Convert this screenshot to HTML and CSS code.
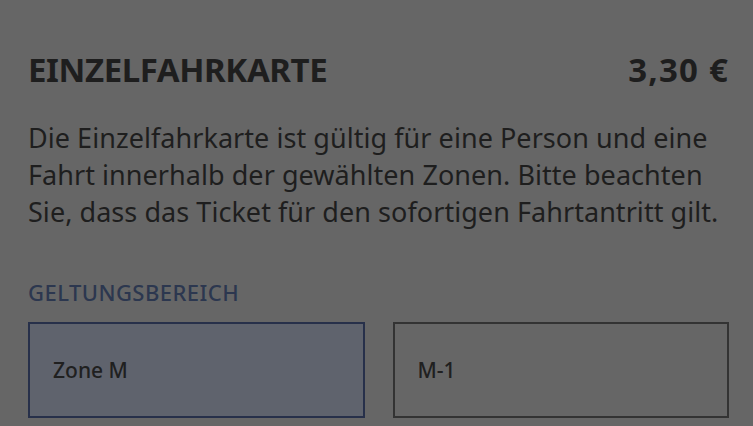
FILE: index.html
```html
<!DOCTYPE html>
<html lang="de">
<head>
<meta charset="utf-8">
<link rel="stylesheet" href="styles.css">
</head>
<body>
<main class="page">
  <header class="head">
    <h1 class="title">EINZELFAHRKARTE</h1>
    <div class="price">3,30 €</div>
  </header>
  <p class="desc">Die Einzelfahrkarte ist gültig für eine Person und eine Fahrt innerhalb der gewählten Zonen. Bitte beachten Sie, dass das Ticket für den sofortigen Fahrtantritt gilt.</p>
  <h2 class="label">GELTUNGSBEREICH</h2>
  <div class="options">
    <div class="opt opt-active">Zone M</div>
    <div class="opt">M-1</div>
  </div>
</main>
</body>
</html>
```
FILE: styles.css
```css
html, body {
  margin: 0;
  padding: 0;
  background: #666666;
}
body {
  width: 753px;
  height: 426px;
  overflow: hidden;
  font-family: "Noto Sans", "Open Sans", sans-serif;
  color: #1e1e1e;
}
.page {
  padding: 50px 24px 0 28px;
}
.head {
  display: flex;
  justify-content: space-between;
  align-items: baseline;
}
.title {
  margin: 0;
  font-size: 33px;
  font-weight: 700;
  line-height: 40px;
  letter-spacing: -0.4px;
}
.price {
  font-size: 33px;
  font-weight: 700;
  line-height: 40px;
  letter-spacing: 1.2px;
}
.desc {
  margin: 29px 0 0 0;
  font-size: 27px;
  line-height: 37px;
  letter-spacing: 0.05px;
}
.label {
  margin: 48px 0 0 0;
  font-size: 22px;
  font-weight: 500;
  color: #2c374f;
  line-height: 28px;
  letter-spacing: 0.45px;
}
.options {
  margin-top: 16px;
  display: grid;
  grid-template-columns: 1fr 1fr;
  column-gap: 28px;
}
.opt {
  box-sizing: border-box;
  height: 96px;
  border: 2px solid #333333;
  display: flex;
  align-items: center;
  padding-left: 23px;
  font-size: 21px;
  font-weight: 500;
  color: #202020;
}
.opt-active {
  border-color: #27304a;
  background: #5f636d;
}
```
